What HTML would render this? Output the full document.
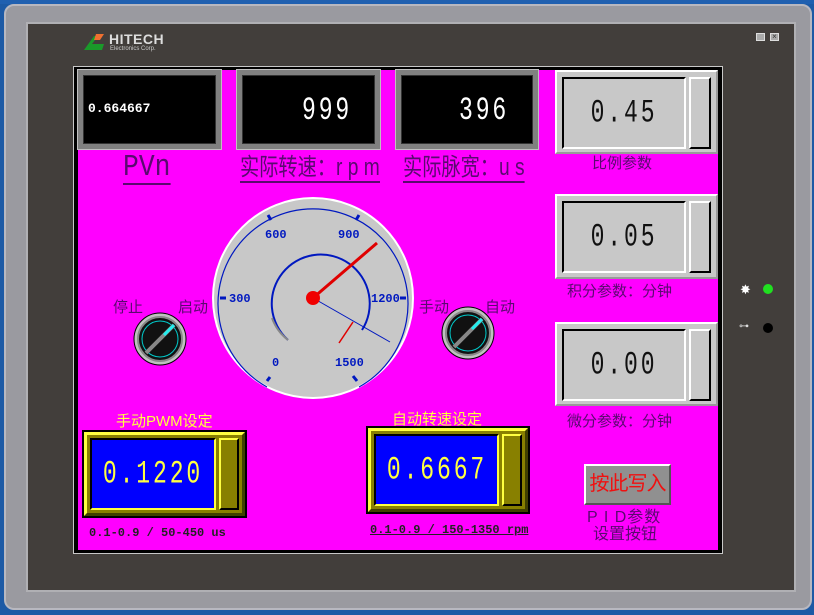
<!DOCTYPE html>
<html><head><meta charset="utf-8"><style>
*{margin:0;padding:0;box-sizing:border-box}
body{width:814px;height:615px;background:#1d5aa5;position:relative;overflow:hidden;font-family:"Liberation Sans","Noto Sans CJK SC",sans-serif}
.a{position:absolute;white-space:nowrap}
.blk{background:#000;border:5px solid #808080;outline:1px solid #c0c0c0;box-shadow:inset 0 0 0 1px #333}
.num{font-family:"Liberation Mono",monospace;color:#fff}
.sx{display:inline-block;transform-origin:0 50%}
.lbl{color:#5a0a70}
.lbl .sx{border-bottom:2px solid #5a0a70;line-height:26px}
.gb{background:#c8c8c8;border-top:2px solid #fff;border-left:2px solid #fff;border-bottom:2px solid #999;border-right:2px solid #999}
.gin{position:absolute;left:5px;top:5px;width:124px;height:72px;border-top:2px solid #000;border-left:2px solid #000;border-bottom:2px solid #fff;border-right:2px solid #fff}
.gin span,.bin span{position:absolute;left:50%;top:50%;transform:translate(-50%,-50%) scaleX(0.72);font-family:"Liberation Mono",monospace;font-size:32px;letter-spacing:4px}
.gin span{color:#111}
.gbt{position:absolute;right:5px;top:5px;width:22px;height:72px;border-top:2px solid #fff;border-left:2px solid #fff;border-bottom:2px solid #000;border-right:2px solid #000}
.yb{background:#888000;border:3px solid #ffff40;border-right-color:#404000;border-bottom-color:#404000;outline:2px solid #000}
.bin{position:absolute;background:#0000ff;border:2px solid #000;border-right-color:#ffff40;border-bottom-color:#ffff40}
.bin span{color:#ffff40}
.cap{color:#5a0a70;font-size:15px}
</style></head><body>
<div class="a" style="left:0;top:0;width:814px;height:4px;background:#2060b0"></div>
<div class="a" style="left:4px;top:4px;width:808px;height:606px;background:#9a9aa0;border-radius:10px;border:2px solid #b8b8c0"></div>
<div class="a" style="left:26px;top:22px;width:770px;height:570px;background:#b0b0b4"></div>
<div class="a" style="left:28px;top:24px;width:766px;height:566px;background:#423e3b"></div>
<svg class="a" style="left:84px;top:32px" width="24" height="20"><polygon points="0,18 10,4 14,4 8,12 20,12 18,18" fill="#1a9a2a"/><polygon points="12,2 20,2 16,8 10,8" fill="#f07030"/></svg>
<div class="a" style="left:109px;top:31px;color:#ddd;font-weight:bold;font-size:14px;letter-spacing:0.5px">HITECH</div>
<div class="a" style="left:110px;top:46px;color:#ccc;font-size:6px">Electronics Corp.</div>
<div class="a" style="left:756px;top:33px;width:9px;height:8px;background:#aaa;border:1px solid #ddd"></div>
<div class="a" style="left:770px;top:33px;width:9px;height:8px;background:#aaa;border:1px solid #ddd;font-size:8px;line-height:6px;text-align:center;color:#333">×</div>
<div class="a" style="left:740px;top:282px;color:#fff;font-size:13px">✸</div>
<div class="a" style="left:763px;top:284px;width:10px;height:10px;border-radius:50%;background:#20e020"></div>
<div class="a" style="left:739px;top:321px;color:#ddd;font-size:10px">⊶</div>
<div class="a" style="left:763px;top:323px;width:10px;height:10px;border-radius:50%;background:#000"></div>
<div class="a" style="left:73px;top:66px;width:650px;height:488px;background:#c8c8c8"></div>
<div class="a" style="left:74px;top:67px;width:648px;height:486px;background:#000"></div>
<div class="a" style="left:78px;top:70px;width:640px;height:480px;background:#ff00ff"></div>
<div class="a blk" style="left:78px;top:70px;width:143px;height:79px"></div>
<div class="a num" style="left:88px;top:101px;font-size:13px;font-weight:bold">0.664667</div>
<div class="a blk" style="left:237px;top:70px;width:143px;height:79px"></div>
<div class="a num" style="left:302px;top:94px;font-size:32px;line-height:34px"><span class="sx" style="transform:scaleX(0.72);letter-spacing:4px">999</span></div>
<div class="a blk" style="left:396px;top:70px;width:142px;height:79px"></div>
<div class="a num" style="left:459px;top:94px;font-size:32px;line-height:34px"><span class="sx" style="transform:scaleX(0.72);letter-spacing:4px">396</span></div>
<div class="a lbl" style="left:123px;top:150px;font-size:31px;font-family:'Liberation Mono',monospace"><span class="sx" style="transform:scaleX(0.85);line-height:30px">PVn</span></div>
<div class="a lbl" style="left:240px;top:154px;font-size:24px"><span class="sx" style="transform:scaleX(0.8)">实际转速：r p m</span></div>
<div class="a lbl" style="left:403px;top:154px;font-size:24px"><span class="sx" style="transform:scaleX(0.8)">实际脉宽：u s</span></div>
<div class="a gb" style="left:555px;top:70px;width:163px;height:84px"><div class="gin"><span>0.45</span></div><div class="gbt"></div></div>
<div class="a cap" style="left:592px;top:152px">比例参数</div>
<div class="a gb" style="left:555px;top:194px;width:163px;height:85px"><div class="gin"><span>0.05</span></div><div class="gbt"></div></div>
<div class="a cap" style="left:567px;top:280px">积分参数：分钟</div>
<div class="a gb" style="left:555px;top:322px;width:163px;height:84px"><div class="gin"><span>0.00</span></div><div class="gbt"></div></div>
<div class="a cap" style="left:567px;top:410px">微分参数：分钟</div>
<svg class="a" style="left:0;top:0" width="814" height="615">
<circle cx="313" cy="298" r="100" fill="#c8c8c8" stroke="#fff" stroke-width="2"/>
<path d="M267,387 A95,95 0 1 1 359,387" fill="none" stroke="#0018c0" stroke-width="1.2"/>
<path d="M288,340 A49,49 0 1 1 362,330" fill="none" stroke="#0018c0" stroke-width="2"/>
<path d="M288,340 A49,49 0 0 1 272,318" fill="none" stroke="#888" stroke-width="2"/>
<path d="M339,343 L353,322" fill="none" stroke="#e00000" stroke-width="1.5"/>
<g stroke="#0018c0" stroke-width="3"><line x1="267" y1="381" x2="270" y2="377"/><line x1="357" y1="381" x2="353" y2="376"/><line x1="220" y1="298" x2="226" y2="298"/><line x1="400" y1="298" x2="406" y2="298"/><line x1="268" y1="215" x2="271" y2="220"/><line x1="359" y1="215" x2="356" y2="220"/></g>
<line x1="313" y1="298" x2="390" y2="342" stroke="#0018c0" stroke-width="1"/>
<line x1="313" y1="298" x2="377" y2="243" stroke="#e00000" stroke-width="3"/>
<circle cx="313" cy="298" r="7" fill="#f00000"/>
<g fill="#0018c0" font-family="Liberation Mono,monospace" font-weight="bold" font-size="12">
<text x="265" y="238">600</text><text x="338" y="238">900</text><text x="229" y="302">300</text><text x="371" y="302">1200</text><text x="272" y="366">0</text><text x="335" y="366">1500</text></g>
<g><circle cx="160" cy="339" r="26" fill="#c0c0c0" stroke="#000"/><circle cx="160" cy="339" r="22" fill="#111" stroke="#888" stroke-width="2"/><circle cx="160" cy="339" r="18" fill="#111" stroke="#0cc" stroke-width="1"/><line x1="146" y1="353" x2="174" y2="325" stroke="#888" stroke-width="4"/><line x1="164" y1="335" x2="174" y2="325" stroke="#2ee" stroke-width="3"/></g>
<g><circle cx="468" cy="333" r="26" fill="#c0c0c0" stroke="#000"/><circle cx="468" cy="333" r="22" fill="#111" stroke="#888" stroke-width="2"/><circle cx="468" cy="333" r="18" fill="#111" stroke="#0cc" stroke-width="1"/><line x1="454" y1="347" x2="482" y2="319" stroke="#888" stroke-width="4"/><line x1="472" y1="329" x2="482" y2="319" stroke="#2ee" stroke-width="3"/></g>
</svg>
<div class="a cap" style="left:113px;top:296px">停止</div>
<div class="a cap" style="left:178px;top:296px">启动</div>
<div class="a cap" style="left:419px;top:296px">手动</div>
<div class="a cap" style="left:485px;top:296px">自动</div>
<div class="a" style="left:116px;top:410px;color:#ffff40;font-size:15px">手动PWM设定</div>
<div class="a yb" style="left:84px;top:432px;width:161px;height:84px"></div>
<div class="bin" style="left:90px;top:438px;width:126px;height:72px"><span>0.1220</span></div>
<div class="a" style="left:219px;top:438px;width:20px;height:72px;border:2px solid #ffff40;border-right-color:#000;border-bottom-color:#000"></div>
<div class="a" style="left:89px;top:526px;font-family:'Liberation Mono',monospace;font-weight:bold;font-size:12px;color:#222">0.1-0.9 / 50-450 us</div>
<div class="a" style="left:392px;top:408px;color:#ffff40;font-size:15px">自动转速设定</div>
<div class="a yb" style="left:368px;top:428px;width:160px;height:84px"></div>
<div class="bin" style="left:374px;top:434px;width:125px;height:72px"><span>0.6667</span></div>
<div class="a" style="left:502px;top:434px;width:20px;height:72px;border:2px solid #ffff40;border-right-color:#000;border-bottom-color:#000"></div>
<div class="a" style="left:370px;top:523px;font-family:'Liberation Mono',monospace;font-weight:bold;font-size:12px;color:#222;text-decoration:underline">0.1-0.9 / 150-1350 rpm</div>
<div class="a" style="left:584px;top:464px;width:87px;height:41px;background:#909090;border:2px solid #fff;border-right-color:#555;border-bottom-color:#555;color:#f01010;font-size:20px;text-align:center;line-height:36px;letter-spacing:-1px">按此写入</div>
<div class="a cap" style="left:587px;top:510px;font-size:16px;line-height:16px;letter-spacing:1px">P I D参数</div>
<div class="a cap" style="left:593px;top:527px;font-size:16px;line-height:16px">设置按钮</div>
</body></html>
